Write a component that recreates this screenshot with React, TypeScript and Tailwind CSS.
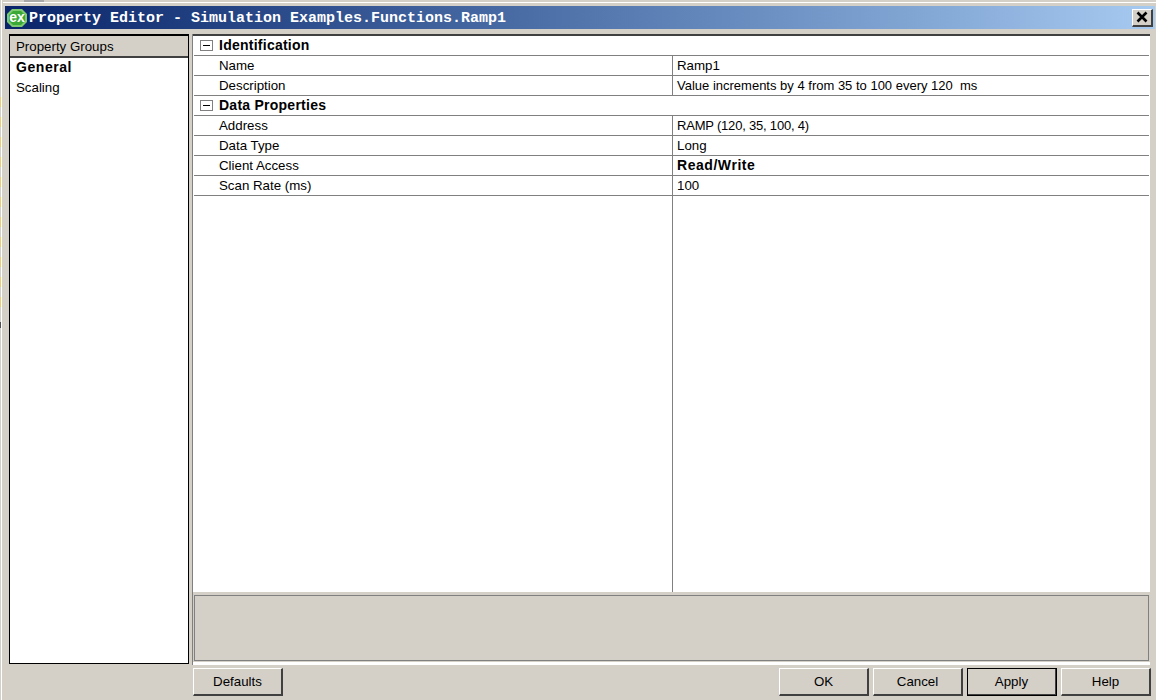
const font = 'font-["Liberation_Sans",Arial,sans-serif] text-[13.3px] text-black'

function PropRow({ name, value, valueClass }: { name: string; value: string; valueClass?: string }) {
  return (
    <div className="flex h-5 border-b border-[#808080]">
      <div className="w-[479px] pl-[25px] leading-[19px] border-r border-[#808080]">{name}</div>
      <div className={`pl-1 leading-[19px] whitespace-pre ${valueClass ?? ''}`}>{value}</div>
    </div>
  )
}

function GroupRow({ title }: { title: string }) {
  return (
    <div className="flex items-center h-5 border-b border-[#808080]">
      <div className="ml-[6px] w-[13px] h-[11px] border border-[#808080] flex items-center justify-center">
        <div className="w-[7px] h-px bg-black" />
      </div>
      <div className="ml-[6px] font-bold text-[14px] tracking-[0.25px]">{title}</div>
    </div>
  )
}

function Btn({ label, isDefault }: { label: string; isDefault?: boolean }) {
  return (
    <button
      className={`w-[90px] h-[28px] pt-px bg-[#d4d0c8] border-t border-l border-r-2 border-b-2 border-t-white border-l-white border-r-[#404040] border-b-[#404040] ${
        isDefault ? 'outline outline-1 -outline-offset-1 outline-black' : ''
      }`}
    >
      {label}
    </button>
  )
}

export default function App() {
  return (
    <div className={`relative w-[1156px] h-[700px] overflow-hidden bg-[#d4d0c8] flex flex-col pl-[2px] pt-[2px] ${font}`}>
      {/* bits of the desktop behind the dialog */}
      <div className="absolute left-0 top-0 w-[2px] h-full border-r border-white bg-[#d4d0c8]" />
      <div className="absolute left-0 top-[97px] w-px h-[210px] bg-[repeating-linear-gradient(to_bottom,#f0cf6a_0,#f0cf6a_10px,transparent_10px,transparent_20px)]" />
      <div className="absolute left-0 top-[322px] w-px h-[6px] bg-[#505050]" />
      <div className="absolute left-[24px] top-0 w-[20px] h-[2px] bg-[#a8a8a8]" />

      <div className="h-[3px] ml-px bg-[#d4d0c8] border-t border-white" />
      <div className="flex-1 flex flex-col pl-[3px] min-h-0">
        <div className="h-[23px] mt-px flex items-center pl-[2px] pr-[2px] w-[1150px] bg-gradient-to-r from-[#0a246a] to-[#a6caf0]">
          <svg width="20" height="18" viewBox="0 0 20 18" className="shrink-0">
            <path d="M5 0 H15 L20 5 V13 L15 18 H5 L0 13 V5 Z" fill="#7cc96f" />
            <path d="M6 2 H14 L18 6 V12 L14 16 H6 L2 12 V6 Z" fill="#3aa935" />
            <text x="10" y="13" textAnchor="middle" fontSize="14" fontWeight="700" fill="#fff" fontFamily="Liberation Sans">ex</text>
          </svg>
          <div className='ml-[2px] pt-[4px] flex-1 font-["Liberation_Mono",monospace] text-[15px] font-bold text-white whitespace-pre'>
            Property Editor - Simulation Examples.Functions.Ramp1
          </div>
          <div className="w-[21px] h-[18px] bg-[#d4d0c8] border-t border-l border-r-2 border-b-2 border-t-white border-l-white border-r-[#404040] border-b-[#404040] flex items-center justify-center">
            <svg width="12" height="12" viewBox="0 0 12 12">
              <path d="M1.5 1.5 L10.5 10.5 M10.5 1.5 L1.5 10.5" stroke="#000" strokeWidth="2.6" />
            </svg>
          </div>
        </div>

        <div className="flex mt-[5px] h-[631px]">
          <div className="ml-[4px] w-[180px] h-[630px] bg-white border-2 border-black border-r border-b border-l flex flex-col">
            <div className="h-5 pl-[6px] leading-[21px] bg-[#d4d0c8] border-b-2 border-[#404040] box-content">Property Groups</div>
            <div className="pl-[6px] h-5 leading-[19px] font-bold text-[14px] tracking-[0.55px]">General</div>
            <div className="pl-[6px] h-5 leading-[20px]">Scaling</div>
          </div>
          <div className="ml-[3px] w-[958px] flex flex-col bg-white border-l border-[#808080]">
            <div className="h-[558px] flex flex-col pl-px pr-[1px] border-t-2 border-[#404040] w-[957px]">
              <GroupRow title="Identification" />
              <PropRow name="Name" value="Ramp1" />
              <PropRow name="Description" value="Value increments by 4 from 35 to 100 every 120  ms" valueClass="text-[13px]" />
              <GroupRow title="Data Properties" />
              <PropRow name="Address" value="RAMP (120, 35, 100, 4)" valueClass="text-[13px] tracking-[-0.2px]" />
              <PropRow name="Data Type" value="Long" />
              <PropRow name="Client Access" value="Read/Write" valueClass="font-bold text-[14px] tracking-[0.55px]" />
              <PropRow name="Scan Rate (ms)" value="100" />
              <div className="flex-1 w-[479px] border-r border-[#808080]" />
            </div>
            <div className="h-[70px] pt-[3px] bg-[#d4d0c8] pl-px pr-[1px]">
              <div className="h-[66px] border border-[#808080]" />
            </div>
          </div>
        </div>

        <div className="flex h-[32px] items-start pt-[3px] pl-[188px] pr-[5px]">
          <Btn label="Defaults" />
          <div className="flex-1" />
          <div className="flex gap-1">
            <Btn label="OK" />
            <Btn label="Cancel" />
            <Btn label="Apply" isDefault />
            <Btn label="Help" />
          </div>
        </div>
      </div>
    </div>
  )
}
